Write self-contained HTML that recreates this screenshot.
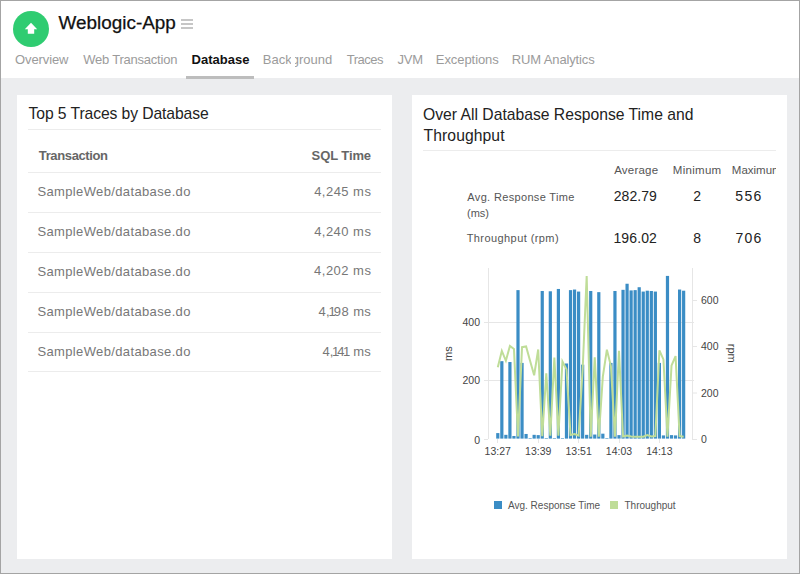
<!DOCTYPE html>
<html><head><meta charset="utf-8"><style>
*{margin:0;padding:0;box-sizing:border-box}
html,body{width:800px;height:574px;overflow:hidden;background:#fff}
body{position:relative;font-family:"Liberation Sans",sans-serif}
.abs{position:absolute;white-space:nowrap}
#frame{position:absolute;left:0;top:0;width:800px;height:574px;border:1px solid #a4a4a4;z-index:50}
#hdr{position:absolute;left:0;top:0;width:800px;height:78px;background:#fff}
#bg{position:absolute;left:0;top:78px;width:800px;height:496px;background:#ecedef}
.panel{position:absolute;top:95px;height:464px;background:#fff}
.circle{position:absolute;left:13px;top:11px;width:36px;height:36px;border-radius:50%;background:#2fcc71}
.hl{position:absolute;height:1px;background:#ececec}
.chart{position:absolute;left:0;top:0}
.clip{position:absolute;overflow:hidden}
.one{margin:0 -2.2px 0 -1.7px}
</style></head><body>
<div id="hdr"></div>
<div id="bg"></div>
<div class="circle"></div>
<svg class="abs" style="left:0;top:0" width="60" height="60"><polygon points="31,22.7 37.2,29.3 34.2,29.3 34.2,33.8 27.8,33.8 27.8,29.3 24.8,29.3" fill="#fff"/></svg>
<div class="abs" style="left:180.5px;top:19.1px;width:12px;height:1.5px;background:#c6c6c6"></div>
<div class="abs" style="left:180.5px;top:23.1px;width:12px;height:1.5px;background:#c6c6c6"></div>
<div class="abs" style="left:180.5px;top:27.2px;width:12px;height:1.5px;background:#c6c6c6"></div>
<div class="abs" style="left:186px;top:76px;width:68px;height:2.5px;background:#bdbdbd"></div>
<div class="panel" style="left:17px;width:375px"></div>
<div class="panel" style="left:412px;width:375px"></div>
<div class="hl" style="left:28px;top:129px;width:353px"></div>
<div class="hl" style="left:28px;top:172px;width:353px"></div>
<div class="hl" style="left:28px;top:212px;width:353px"></div>
<div class="hl" style="left:28px;top:252px;width:353px"></div>
<div class="hl" style="left:28px;top:292px;width:353px"></div>
<div class="hl" style="left:28px;top:332px;width:353px"></div>
<div class="hl" style="left:28px;top:371px;width:353px"></div>

<div class="hl" style="left:423px;top:150px;width:353px"></div>
<div id="title" class="abs" style="left:58.62px;top:12.18px;font-size:18.9px;letter-spacing:-0.006px;color:#111;line-height:22px;-webkit-text-stroke:0.25px #111">Weblogic-App</div>
<div id="t_over" class="abs" style="left:15.12px;top:51.60px;font-size:13px;letter-spacing:-0.113px;color:#9b9b9b;line-height:16px">Overview</div>
<div id="t_web" class="abs" style="left:83.19px;top:51.60px;font-size:13px;letter-spacing:-0.221px;color:#9b9b9b;line-height:16px">Web Transaction</div>
<div id="t_db" class="abs" style="left:191.60px;top:51.60px;font-size:13px;letter-spacing:-0.003px;color:#111;line-height:16px;font-weight:bold">Database</div>
<div id="t_bg" class="abs" style="left:262.86px;top:51.60px;font-size:13px;letter-spacing:-0.012px;color:#9b9b9b;line-height:16px">Background</div>
<div id="t_tr" class="abs" style="left:346.69px;top:51.60px;font-size:13px;letter-spacing:-0.498px;color:#9b9b9b;line-height:16px">Traces</div>
<div id="t_jvm" class="abs" style="left:397.56px;top:51.60px;font-size:13px;letter-spacing:-0.245px;color:#9b9b9b;line-height:16px">JVM</div>
<div id="t_exc" class="abs" style="left:435.86px;top:51.60px;font-size:13px;letter-spacing:-0.078px;color:#9b9b9b;line-height:16px">Exceptions</div>
<div id="t_rum" class="abs" style="left:511.83px;top:51.60px;font-size:13px;letter-spacing:-0.139px;color:#9b9b9b;line-height:16px">RUM Analytics</div>
<div id="top5" class="abs" style="left:28.61px;top:103.46px;font-size:15.7px;letter-spacing:-0.097px;color:#222;line-height:21px">Top 5 Traces by Database</div>
<div id="th1" class="abs" style="left:38.82px;top:148.25px;font-size:13px;letter-spacing:-0.372px;color:#666;line-height:16px;font-weight:bold">Transaction</div>
<div id="th2" class="abs" style="left:311.62px;top:148.25px;font-size:13px;letter-spacing:-0.104px;color:#666;line-height:16px;font-weight:bold">SQL Time</div>
<div id="over" class="abs" style="left:423.09px;top:104.45px;font-size:15.7px;letter-spacing:-0.000px;color:#222;line-height:21px">Over All Database Response Time and</div>
<div id="over2" class="abs" style="left:423.57px;top:124.54px;font-size:15.7px;letter-spacing:0.080px;color:#222;line-height:21px">Throughput</div>
<div id="avg" class="abs" style="left:614.19px;top:162.82px;font-size:11.5px;letter-spacing:0.203px;color:#555;line-height:14px">Average</div>
<div id="min" class="abs" style="left:672.82px;top:162.82px;font-size:11.5px;letter-spacing:0.291px;color:#555;line-height:14px">Minimum</div>
<div id="max" class="abs" style="left:731.81px;top:162.82px;font-size:11.5px;letter-spacing:0.000px;color:#555;line-height:14px">Maximum</div>
<div id="avgresp" class="abs" style="left:467.33px;top:188.66px;font-size:11px;letter-spacing:0.339px;color:#555;line-height:16px">Avg. Response Time</div>
<div id="avgms" class="abs" style="left:467.00px;top:205.00px;font-size:11px;letter-spacing:0.000px;color:#555;line-height:16px">(ms)</div>
<div id="thr" class="abs" style="left:466.64px;top:230.30px;font-size:11px;letter-spacing:0.427px;color:#555;line-height:16px">Throughput (rpm)</div>
<div id="v282" class="abs" style="left:613.79px;top:188.18px;font-size:14px;letter-spacing:0.045px;color:#222;line-height:16px">282.79</div>
<div id="v2" class="abs" style="left:693.37px;top:188.18px;font-size:14px;letter-spacing:0.000px;color:#222;line-height:16px">2</div>
<div id="v556" class="abs" style="left:735.32px;top:188.18px;font-size:14px;letter-spacing:1.311px;color:#222;line-height:16px">556</div>
<div id="v196" class="abs" style="left:613.38px;top:229.64px;font-size:14px;letter-spacing:0.139px;color:#222;line-height:16px">196.02</div>
<div id="v8" class="abs" style="left:693.31px;top:229.64px;font-size:14px;letter-spacing:0.000px;color:#222;line-height:16px">8</div>
<div id="v706" class="abs" style="left:735.49px;top:229.64px;font-size:14px;letter-spacing:1.226px;color:#222;line-height:16px">706</div>
<div id="r0" class="abs" style="left:37.43px;top:184.30px;font-size:13px;letter-spacing:0.363px;color:#777;line-height:16px">SampleWeb/database.do</div>
<div id="r1" class="abs" style="left:37.43px;top:224.30px;font-size:13px;letter-spacing:0.363px;color:#777;line-height:16px">SampleWeb/database.do</div>
<div id="r2" class="abs" style="left:37.43px;top:263.58px;font-size:13px;letter-spacing:0.363px;color:#777;line-height:16px">SampleWeb/database.do</div>
<div id="r3" class="abs" style="left:37.43px;top:303.58px;font-size:13px;letter-spacing:0.363px;color:#777;line-height:16px">SampleWeb/database.do</div>
<div id="r4" class="abs" style="left:37.43px;top:344.30px;font-size:13px;letter-spacing:0.363px;color:#777;line-height:16px">SampleWeb/database.do</div>
<div id="rv0" class="abs" style="left:314.18px;top:183.78px;font-size:13px;letter-spacing:0.463px;color:#777;line-height:16px">4,245 ms</div>
<div id="rv1" class="abs" style="left:314.13px;top:223.78px;font-size:13px;letter-spacing:0.470px;color:#777;line-height:16px">4,240 ms</div>
<div id="rv2" class="abs" style="left:314.08px;top:263.48px;font-size:13px;letter-spacing:0.479px;color:#777;line-height:16px">4,202 ms</div>
<div id="rv3" class="abs" style="left:318.43px;top:303.56px;font-size:13px;letter-spacing:0.405px;color:#777;line-height:16px">4,<span class="one">1</span>98 ms</div>
<div id="rv4" class="abs" style="left:322.40px;top:343.78px;font-size:13px;letter-spacing:0.210px;color:#777;line-height:16px">4,<span class="one">1</span>4<span class="one">1</span><span style="margin-left:1.2px"> </span>ms</div>
<div class="abs" style="left:291px;top:52px;width:3.5px;height:16px;background:#fff"></div>
<div class="abs" style="left:776px;top:160px;width:11px;height:20px;background:#fff"></div>
<svg class="chart" width="800" height="574" viewBox="0 0 800 574">
<g stroke="#e6e6e6" stroke-width="1" fill="none">
<line x1="488" y1="322.5" x2="694" y2="322.5"/>
<line x1="488" y1="380.5" x2="694" y2="380.5"/>
<line x1="484" y1="322.5" x2="488" y2="322.5"/>
<line x1="484" y1="380.5" x2="488" y2="380.5"/>
<line x1="484" y1="439.5" x2="488" y2="439.5"/>
<line x1="488.5" y1="268" x2="488.5" y2="439"/>
<line x1="692.5" y1="268" x2="692.5" y2="439"/>
<line x1="692" y1="300.5" x2="697" y2="300.5"/>
<line x1="692" y1="346.5" x2="697" y2="346.5"/>
<line x1="692" y1="393" x2="697" y2="393"/>
<line x1="692" y1="439.5" x2="697" y2="439.5"/>
<line x1="497.5" y1="439" x2="497.5" y2="443"/>
<line x1="538.5" y1="439" x2="538.5" y2="443"/>
<line x1="578.5" y1="439" x2="578.5" y2="443"/>
<line x1="619.5" y1="439" x2="619.5" y2="443"/>
<line x1="659.5" y1="439" x2="659.5" y2="443"/>
</g>
<g fill="#3b8dc5"><rect x="496.20" y="433.09" width="3.2" height="5.51"/><rect x="500.24" y="361.17" width="3.2" height="77.43"/><rect x="504.28" y="434.83" width="3.2" height="3.77"/><rect x="508.32" y="362.04" width="3.2" height="76.56"/><rect x="512.36" y="435.99" width="3.2" height="2.61"/><rect x="516.40" y="290.12" width="3.2" height="148.48"/><rect x="520.44" y="362.91" width="3.2" height="75.69"/><rect x="524.48" y="433.96" width="3.2" height="4.64"/><rect x="528.52" y="438.02" width="3.2" height="0.58"/><rect x="532.56" y="434.83" width="3.2" height="3.77"/><rect x="536.60" y="435.12" width="3.2" height="3.48"/><rect x="540.64" y="290.99" width="3.2" height="147.61"/><rect x="544.68" y="438.02" width="3.2" height="0.58"/><rect x="548.72" y="291.28" width="3.2" height="147.32"/><rect x="552.76" y="438.02" width="3.2" height="0.58"/><rect x="556.80" y="288.96" width="3.2" height="149.64"/><rect x="560.84" y="438.02" width="3.2" height="0.58"/><rect x="564.88" y="363.49" width="3.2" height="75.11"/><rect x="568.92" y="290.12" width="3.2" height="148.48"/><rect x="572.96" y="289.54" width="3.2" height="149.06"/><rect x="577.00" y="291.57" width="3.2" height="147.03"/><rect x="581.04" y="364.65" width="3.2" height="73.95"/><rect x="585.08" y="434.83" width="3.2" height="3.77"/><rect x="589.12" y="290.99" width="3.2" height="147.61"/><rect x="593.16" y="434.54" width="3.2" height="4.06"/><rect x="597.20" y="292.15" width="3.2" height="146.45"/><rect x="601.24" y="433.67" width="3.2" height="4.93"/><rect x="605.28" y="438.02" width="3.2" height="0.58"/><rect x="609.32" y="362.91" width="3.2" height="75.69"/><rect x="613.36" y="290.99" width="3.2" height="147.61"/><rect x="617.40" y="435.12" width="3.2" height="3.48"/><rect x="621.44" y="289.83" width="3.2" height="148.77"/><rect x="625.48" y="283.74" width="3.2" height="154.86"/><rect x="629.52" y="290.41" width="3.2" height="148.19"/><rect x="633.56" y="290.12" width="3.2" height="148.48"/><rect x="637.60" y="287.22" width="3.2" height="151.38"/><rect x="641.64" y="291.57" width="3.2" height="147.03"/><rect x="645.68" y="290.70" width="3.2" height="147.90"/><rect x="649.72" y="290.99" width="3.2" height="147.61"/><rect x="653.76" y="291.57" width="3.2" height="147.03"/><rect x="657.80" y="362.91" width="3.2" height="75.69"/><rect x="661.84" y="435.41" width="3.2" height="3.19"/><rect x="665.88" y="275.91" width="3.2" height="162.69"/><rect x="669.92" y="435.12" width="3.2" height="3.48"/><rect x="673.96" y="435.41" width="3.2" height="3.19"/><rect x="678.00" y="289.54" width="3.2" height="149.06"/><rect x="682.04" y="290.70" width="3.2" height="147.90"/></g>
<polyline points="497.80,367.21 501.84,350.86 505.88,360.76 509.92,346.02 513.96,349.01 518.00,436.53 522.04,347.17 526.08,346.48 530.12,360.99 534.16,375.27 538.20,349.47 542.24,436.30 546.28,373.43 550.32,435.61 554.36,357.53 558.40,435.61 562.44,361.45 566.48,369.28 570.52,434.92 574.56,433.99 578.60,435.61 582.64,369.51 586.68,276.01 590.72,436.76 594.76,357.30 598.80,436.76 602.84,376.65 606.88,349.70 610.92,366.06 614.96,436.76 619.00,350.86 623.04,436.53 627.08,435.61 631.12,436.53 635.16,436.76 639.20,436.76 643.24,436.76 647.28,435.15 651.32,436.53 655.36,436.07 659.40,350.40 663.44,359.38 667.48,436.76 671.52,365.59 675.56,356.15 679.60,436.07 683.64,436.76" fill="none" stroke="#bfdd98" stroke-width="2" stroke-linejoin="miter"/>
<g font-family="Liberation Sans, sans-serif" font-size="10.5" fill="#444">
<text x="480" y="325.8" text-anchor="end">400</text>
<text x="480" y="383.8" text-anchor="end">200</text>
<text x="480" y="443.6" text-anchor="end">0</text>
<text x="701" y="304.3">600</text>
<text x="701" y="350.4">400</text>
<text x="701" y="396.6">200</text>
<text x="701" y="442.6">0</text>
<text x="497.7" y="455" text-anchor="middle">13:27</text>
<text x="538.2" y="455" text-anchor="middle">13:39</text>
<text x="578.6" y="455" text-anchor="middle">13:51</text>
<text x="619" y="455" text-anchor="middle">14:03</text>
<text x="659.4" y="455" text-anchor="middle">14:13</text>
<text font-size="11" transform="translate(452.2 353.7) rotate(-90)" text-anchor="middle">ms</text>
<text font-size="11" transform="translate(727.6 353.3) rotate(90)" text-anchor="middle">rpm</text>
</g>
<rect x="494" y="501" width="8" height="8" fill="#3b8dc5"/>
<rect x="610" y="501" width="8" height="8" fill="#bfdd98"/>
<g font-family="Liberation Sans, sans-serif" font-size="10" fill="#555">
<text x="508" y="509">Avg. Response Time</text>
<text x="624.5" y="509">Throughput</text>
</g>
</svg>
<div id="frame"></div>
</body></html>
